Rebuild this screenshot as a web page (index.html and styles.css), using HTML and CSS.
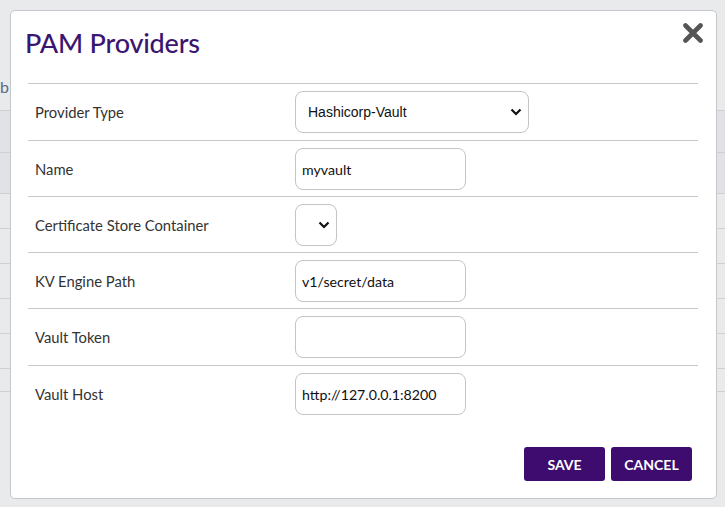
FILE: index.html
```html
<!DOCTYPE html>
<html>
<head>
<meta charset="utf-8">
<link rel="stylesheet" href="styles.css">
</head>
<body>
<div class="page">
  <div class="page-head"><span class="crumb">b</span></div>
  <div class="page-row shade"></div>
  <div class="page-row shade tall"></div>
  <div class="page-row"></div>
  <div class="page-row"></div>
  <div class="page-row"></div>
  <div class="page-row"></div>
  <div class="page-row"></div>
  <div class="page-row short"></div>
</div>

<div class="modal">
  <div class="modal-head">
    <h1 class="title">PAM Providers</h1>
    <button class="close" aria-label="Close">
      <svg width="22" height="20" viewBox="0 0 22 20"><path d="M3.5 2.5 L18.5 17.5 M18.5 2.5 L3.5 17.5" stroke="#555" stroke-width="4.6" stroke-linecap="round"/></svg>
    </button>
  </div>
  <table class="form">
    <tr class="roomy">
      <td class="label">Provider Type</td>
      <td class="field"><div class="select wide"><span>Hashicorp-Vault</span><svg class="chev" width="12" height="8" viewBox="0 0 12 8"><path d="M1.5 1.5 L6 6 L10.5 1.5" fill="none" stroke="#111" stroke-width="2.2"/></svg></div></td>
    </tr>
    <tr>
      <td class="label">Name</td>
      <td class="field"><div class="input">myvault</div></td>
    </tr>
    <tr>
      <td class="label">Certificate Store Container</td>
      <td class="field"><div class="select tiny"><svg class="chev" width="12" height="8" viewBox="0 0 12 8"><path d="M1.5 1.5 L6 6 L10.5 1.5" fill="none" stroke="#111" stroke-width="2.2"/></svg></div></td>
    </tr>
    <tr>
      <td class="label">KV Engine Path</td>
      <td class="field"><div class="input">v1/secret/data</div></td>
    </tr>
    <tr class="roomy">
      <td class="label">Vault Token</td>
      <td class="field"><div class="input"></div></td>
    </tr>
    <tr>
      <td class="label">Vault Host</td>
      <td class="field"><div class="input">http://127.0.0.1:8200</div></td>
    </tr>
  </table>
  <div class="footer">
    <button class="btn">SAVE</button>
    <button class="btn">CANCEL</button>
  </div>
</div>
</body>
</html>
```

FILE: styles.css
```css
html, body {
  margin: 0;
  padding: 0;
}
body {
  background: #e9eaec;
  width: 725px;
  height: 507px;
  overflow: hidden;
  position: relative;
  font-family: Lato, "Open Sans", sans-serif;
}
.page-head {
  height: 111px;
  border-bottom: 1px solid #cfd0d3;
  box-sizing: border-box;
  position: relative;
}
.crumb {
  position: absolute;
  left: 0;
  top: 77px;
  font-size: 16px;
  color: #5b6b84;
}
.page-row {
  height: 35px;
  border-bottom: 1px solid #cfd0d3;
  box-sizing: border-box;
}
.page-row.shade {
  background: #e1e2e5;
  height: 42px;
}
.page-row.tall {
  height: 41px;
}
.page-row.short {
  height: 23px;
}

.modal {
  position: absolute;
  left: 10px;
  top: 10px;
  width: 707px;
  height: 489px;
  box-sizing: border-box;
  background: #fff;
  border: 1px solid #c6c7ca;
  border-radius: 5px;
  padding: 0 18px 0 17px;
  display: flex;
  flex-direction: column;
}
.modal-head {
  display: flex;
  justify-content: space-between;
  align-items: flex-start;
  height: 72px;
}
.title {
  margin: 15px 0 0 -3px;
  font-size: 27px;
  font-weight: 500;
  color: #3a1670;
  letter-spacing: -0.2px;
}
.close {
  border: 0;
  background: none;
  padding: 0;
  margin: 12px -6px 0 0;
  width: 22px;
  height: 20px;
}
.close svg { display: block; }

.form {
  border-collapse: collapse;
  width: 670px;
}
.form td {
  border-top: 1px solid #c8c8c8;
  padding: 7px 0 6px;
  height: 42px;
  vertical-align: middle;
}
.form tr.roomy td {
  padding-bottom: 7px;
}
.label {
  width: 260px;
  padding-left: 7px !important;
  font-size: 14.8px;
  color: #333;
}
.input, .select {
  box-sizing: border-box;
  height: 42px;
  border: 1px solid #c4c4c4;
  border-radius: 8px;
  background: #fff;
  display: flex;
  align-items: center;
}
.input {
  width: 171px;
  padding-left: 6px;
  font-size: 14.2px;
  color: #111;
}
.select {
  position: relative;
  font-family: "Liberation Sans", Arial, sans-serif;
  font-size: 14px;
  color: #111;
}
.select.wide {
  width: 234px;
  padding-left: 12px;
}
.select.tiny {
  width: 42px;
}
.chev {
  position: absolute;
  right: 6px;
  top: 16px;
}
.footer {
  margin-top: auto;
  margin-bottom: 17px;
  display: flex;
  justify-content: flex-end;
  gap: 6px;
  padding-right: 6px;
}
.btn {
  height: 34px;
  width: 81px;
  border: 0;
  border-radius: 3px;
  background: #3d0c6e;
  color: #fff;
  font-family: Lato, sans-serif;
  font-weight: 700;
  font-size: 14px;
  padding: 0;
}
```
